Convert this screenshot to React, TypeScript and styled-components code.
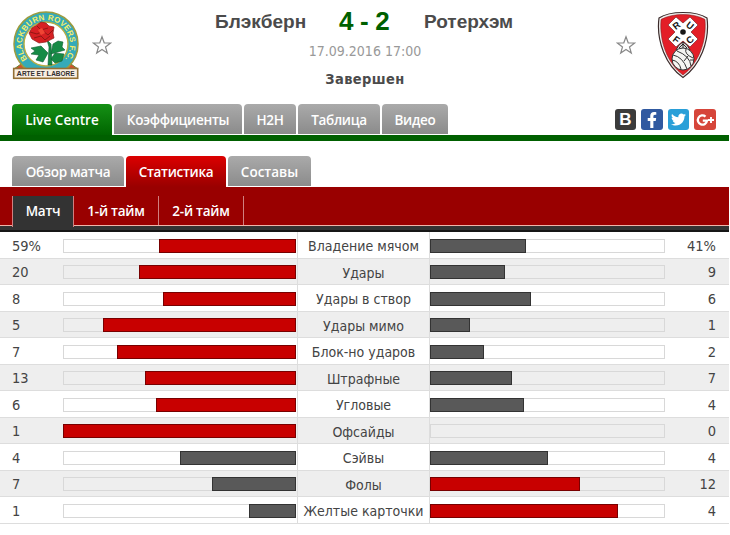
import styled, { createGlobalStyle, css } from "styled-components";
import { FaFacebookF, FaTwitter } from "react-icons/fa";

const GlobalStyle = createGlobalStyle`
  * {
    box-sizing: border-box;
  }

  body {
    margin: 0;
    background-color: #ffffff;
    font-family: "DejaVu Sans Condensed", "DejaVu Sans", Tahoma, sans-serif;
    color: #444444;
    overflow: hidden;
  }
`;

const Page = styled.div`
  width: 729px;
  height: 535px;
  overflow: hidden;
`;

const Header = styled.header`
  display: flex;
  height: 104px;
  padding: 11px 20px 0 12px;
`;

const StarButton = styled.button<{ $side: "left" | "right" }>`
  width: 20px;
  height: 20px;
  margin: ${(props) => (props.$side === "left" ? "24px 0 0 12px" : "24px 21px 0 0")};
  padding: 0;
  border: 0;
  background: none;
  cursor: pointer;

  svg {
    display: block;
  }
`;

const Summary = styled.div`
  flex: 1;
  display: flex;
  flex-direction: column;
  align-items: center;
  padding-left: 2px;
`;

const Teams = styled.div`
  display: grid;
  grid-template-columns: 90px 51px 91px;
  column-gap: 34px;
  height: 29px;
  margin-top: -5px;
  align-items: center;
  font-family: "Liberation Sans", Arial, sans-serif;
  font-weight: bold;
  white-space: nowrap;
`;

const TeamName = styled.span`
  font-size: 19px;
  color: #4b4b4b;
`;

const Score = styled.span`
  font-size: 26px;
  letter-spacing: -0.3px;
  color: #006000;
`;

const KickOff = styled.div`
  height: 18px;
  margin-top: 7px;
  font-size: 14px;
  line-height: 18px;
  color: #999999;
`;

const Status = styled.div`
  height: 18px;
  margin-top: 10px;
  font-size: 14.5px;
  font-weight: bold;
  line-height: 18px;
  letter-spacing: 0.4px;
  color: #4b4b4b;
`;

const NavRow = styled.nav<{ $color: string; $line: number }>`
  display: flex;
  align-items: flex-end;
  gap: 2px;
  padding-left: 12px;
  padding-right: 13px;
  border-bottom: ${(props) => props.$line}px solid ${(props) => props.$color};
`;

const tabText = css`
  font-family: "Open Sans", "Noto Sans", sans-serif;
  font-size: 13.5px;
  font-weight: 600;
  color: #ffffff;
  white-space: nowrap;
  cursor: pointer;
`;

const tabColors = {
  grey: css`
    height: 30px;
    margin-bottom: 1px;
    line-height: 32px;
    background: linear-gradient(#aaaaaa, #8b8b8b);
  `,
  green: css`
    height: 31px;
    line-height: 32px;
    background: linear-gradient(#159015, #006500);
  `,
  red: css`
    height: 31px;
    line-height: 32px;
    background: linear-gradient(#dc0000, #990000);
  `,
};

const Tab = styled.a<{ $tone: keyof typeof tabColors; $width: number; $spacing?: number }>`
  ${tabText}
  display: flex;
  justify-content: center;
  width: ${(props) => props.$width}px;
  border-radius: 4px 4px 0 0;
  letter-spacing: ${(props) => props.$spacing ?? -0.3}px;
  ${(props) => tabColors[props.$tone]}
`;

const Social = styled.div`
  display: flex;
  gap: 5px;
  margin-left: auto;
  margin-bottom: 5px;
`;

const SocialLink = styled.a<{ $color: string }>`
  display: flex;
  align-items: center;
  justify-content: center;
  width: 21.6px;
  height: 21px;
  border-radius: 3px;
  background-color: ${(props) => props.$color};
  color: #ffffff;
  font-family: "Liberation Sans", Arial, sans-serif;
  font-size: 17px;
  font-weight: bold;
`;

const Subsection = styled.section`
  padding-top: 15px;
`;

const Periods = styled.nav`
  display: flex;
  height: 38px;
  padding: 8px 0 0 12px;
  background-color: #990000;
  border-bottom: 1px solid #f0b4aa;
`;

const Period = styled.a<{ $active?: boolean; $width: number }>`
  ${tabText}
  width: ${(props) => props.$width}px;
  height: 29px;
  border-right: 1px solid #d08080;
  text-align: center;
  line-height: 30px;
  letter-spacing: -0.25px;

  ${(props) =>
    props.$active &&
    `
    height: 31px;
    border-left: 1px solid #d08080;
    background-color: #333333;
  `}
`;

const DarkLine = styled.div`
  height: 6px;
  background-color: #333333;
  border-bottom: 2px solid #161616;
`;

const Table = styled.div`
  display: flex;
  flex-direction: column;
`;

const Row = styled.div`
  display: grid;
  grid-template-columns: 63px 233px 134px 235px 1fr;
  align-items: center;
  height: 26.55px;
  border-bottom: 1px solid #dddddd;
  font-size: 14px;

  &:nth-child(even) {
    background-color: #eeeeee;
  }
`;

const Value = styled.span<{ $right?: boolean }>`
  padding: ${(props) => (props.$right ? "0 13px 0 0" : "0 0 0 12px")};
  text-align: ${(props) => (props.$right ? "right" : "left")};
  font-size: 14.5px;
  line-height: 20px;
`;

const Label = styled.span`
  height: 100%;
  margin-left: 1px;
  border: solid #dddddd;
  border-width: 0 1px;
  padding-top: 1px;
  line-height: 26px;
  text-align: center;
  white-space: nowrap;
`;

const Track = styled.div<{ $home?: boolean }>`
  display: flex;
  justify-content: ${(props) => (props.$home ? "flex-end" : "flex-start")};
  height: 14px;
  box-shadow: inset 0 0 0 1px #d8d8d8;
`;

const Bar = styled.div<{ $leading: boolean }>`
  flex: none;
  height: 14px;
  background-color: ${(props) => (props.$leading ? "#c80000" : "#595959")};
  border: 1px solid ${(props) => (props.$leading ? "#780000" : "#333333")};
`;

const mainTabs = [
  { title: "Коэффициенты", width: 128 },
  { title: "H2H", width: 52 },
  { title: "Таблица", width: 82 },
  { title: "Видео", width: 66 },
];

const stats = [
  { label: "Владение мячом", home: "59%", away: "41%", homeBar: 59, awayBar: 41 },
  { label: "Удары", home: "20", away: "9", homeBar: 67.5, awayBar: 32 },
  { label: "Удары в створ", home: "8", away: "6", homeBar: 57, awayBar: 43 },
  { label: "Удары мимо", home: "5", away: "1", homeBar: 83, awayBar: 17 },
  { label: "Блок-но ударов", home: "7", away: "2", homeBar: 77, awayBar: 23 },
  { label: "Штрафные", home: "13", away: "7", homeBar: 65, awayBar: 35 },
  { label: "Угловые", home: "6", away: "4", homeBar: 60, awayBar: 40 },
  { label: "Офсайды", home: "1", away: "0", homeBar: 100, awayBar: 0 },
  { label: "Сэйвы", home: "4", away: "4", homeBar: 50, awayBar: 50 },
  { label: "Фолы", home: "7", away: "12", homeBar: 36, awayBar: 64 },
  { label: "Желтые карточки", home: "1", away: "4", homeBar: 20, awayBar: 80 },
];

const Star = () => (
  <svg width="20" height="20" viewBox="0 0 20 20" fill="#fff" stroke="#888" strokeWidth="1.2">
    <path d="M10 1.8 12.2 7.8 18.6 8 13.5 11.9 15.3 18 10 14.4 4.7 18 6.5 11.9 1.4 8 7.8 7.8Z" />
  </svg>
);

const BlackburnCrest = () => (
  <svg width="68" height="70" viewBox="0 0 68 70">
    <path d="M2 58 9 53 59 53 66 58Z" fill="#d4512c" stroke="#6a8a35" />
    <circle cx="34" cy="33" r="32" fill="#35aab8" stroke="#9d9b3d" strokeWidth="1.5" />
    <circle cx="34" cy="33" r="22" fill="#fff" stroke="#b7ad45" strokeWidth="1.4" />
    <path id="crest-arc" d="M18 51A24 24 0 1 1 50 51" fill="none" />
    <text fontFamily="Liberation Sans" fontSize="8" fontWeight="bold" fill="#f6ee6a">
      <textPath href="#crest-arc" startOffset="4" textLength="107">
        BLACKBURN ROVERS F.C.
      </textPath>
    </text>
    <g fill="#168b46" stroke="#0b5d30" strokeWidth=".6">
      <path d="M35 29 39 33 40 54 36 54 37 36Z" />
      <path d="M36 42 29 35 19 37 23 40 19 43 27 44 24 49 31 51Z" />
      <path d="M39 43 41 33 46 30 51 31 50 36 53 39Z" />
      <path d="M39 48 43 42 52 43 50 50 43 52Z" />
    </g>
    <path
      d="M20 17 25 14 29 11 34 12 37 15 42 16 41 22 42 27 34 31 27 32 20 28 17 22Z"
      fill="#d62023"
      stroke="#8c1918"
      strokeWidth=".7"
    />
    <path
      d="M18 21 25 23 31 20 36 24 41 19M25 15 29 19 36 17M22 27 29 25 33 29 38 25"
      fill="none"
      stroke="#8a1512"
      strokeWidth=".9"
    />
    <path d="M26 19 30 17 33 22 29 24Z" fill="#f04534" />
    <rect x="1.7" y="57.5" width="64" height="9.8" fill="#f9eee0" stroke="#947034" strokeWidth="1.6" />
    <g fontFamily="Liberation Sans" fontWeight="bold" fill="#353030">
      <text x="4.5" y="65" textLength="58" fontSize="7.5">
        <tspan>A</tspan>
        <tspan fontSize="6.5">RTE ET </tspan>
        <tspan>L</tspan>
        <tspan fontSize="6.5">ABORE</tspan>
      </text>
    </g>
  </svg>
);

const RotherhamCrest = () => (
  <svg width="52" height="68" viewBox="0 0 52 68">
    <path
      d="M26 1.5C34 1.5 44 3 50 7 53 30 43 55 26 66.5 9 55-1 30 2 7 8 3 18 1.5 26 1.5Z"
      fill="#f3f1ef"
      stroke="#3b2b2b"
      strokeWidth="1.2"
    />
    <path
      d="M26 3.5C34 3.5 42 5 48 8.5 50 31 41 53 26 64 11 53 2 31 4 8.5 10 5 18 3.5 26 3.5Z"
      fill="#e31e27"
      stroke="#751419"
      strokeWidth=".5"
    />
    <path
      d="M11 14 19 6 26 12 33 6 41 14 34 21 41 28 33 36 26 30 19 36 11 28 18 21Z"
      fill="#fff"
      stroke="#6b1619"
      strokeWidth=".6"
    />
    <circle cx="26" cy="21" r="2.8" fill="#171717" />
    <g fontFamily="Liberation Sans" fontSize="9.5" fontWeight="bold" fill="#171717" textAnchor="middle">
      <text transform="translate(21.4 17.2) rotate(-38)">R</text>
      <text transform="translate(31 17.2) rotate(38)">U</text>
      <text transform="translate(17.4 31.4) rotate(38)">F</text>
      <text transform="translate(35 31.4) rotate(-38)">C</text>
    </g>
    <path d="M19 39 22 34 26 31 30 34 33 39Z" fill="#ddd" stroke="#171717" strokeWidth=".8" />
    <path d="M22 37 26 33 30 37M26 31V38" fill="none" stroke="#171717" strokeWidth=".9" />
    <circle cx="26" cy="48" r="11" fill="#f5f5f2" stroke="#333" />
    <path
      d="M16 44Q26 46 30 58M20 40Q33 45 34 55M29 38Q27 43 36 47M15 49Q22 50 24 58M31 45 27 50M37 49H33"
      fill="none"
      stroke="#333"
    />
  </svg>
);

const GooglePlus = () => (
  <svg width="20" height="16" viewBox="0 0 20 16" fill="none" stroke="#fff" strokeWidth="2.3">
    <path d="M10.5 4.6A4.6 4.6 0 1 0 12 8.6H7.8" />
    <path d="M16 5V11M13 8H19" strokeWidth="1.9" />
  </svg>
);

export default function App() {
  return (
    <Page>
      <GlobalStyle />
      <Header>
        <BlackburnCrest />
        <StarButton $side="left" aria-label="Блэкберн">
          <Star />
        </StarButton>
        <Summary>
          <Teams>
            <TeamName>Блэкберн</TeamName>
            <Score>4 - 2</Score>
            <TeamName>Ротерхэм</TeamName>
          </Teams>
          <KickOff>17.09.2016 17:00</KickOff>
          <Status>Завершен</Status>
        </Summary>
        <StarButton $side="right" aria-label="Ротерхэм">
          <Star />
        </StarButton>
        <RotherhamCrest />
      </Header>

      <NavRow $color="#006000" $line={6}>
        <Tab $tone="green" $width={100} $spacing={0}>
          Live Centre
        </Tab>
        {mainTabs.map((tab) => (
          <Tab key={tab.title} $tone="grey" $width={tab.width}>
            {tab.title}
          </Tab>
        ))}
        <Social>
          <SocialLink $color="#3b3b3b">B</SocialLink>
          <SocialLink $color="#3059a0">
            <FaFacebookF size={16} />
          </SocialLink>
          <SocialLink $color="#299fd8">
            <FaTwitter size={15} />
          </SocialLink>
          <SocialLink $color="#d6453a">
            <GooglePlus />
          </SocialLink>
        </Social>
      </NavRow>

      <Subsection>
        <NavRow $color="#990000" $line={1}>
          <Tab $tone="grey" $width={112}>
            Обзор матча
          </Tab>
          <Tab $tone="red" $width={100}>
            Статистика
          </Tab>
          <Tab $tone="grey" $width={83} $spacing={0}>
            Составы
          </Tab>
        </NavRow>
        <Periods>
          <Period $active $width={62}>
            Матч
          </Period>
          <Period $width={85}>1-й тайм</Period>
          <Period $width={85}>2-й тайм</Period>
        </Periods>
        <DarkLine />
      </Subsection>

      <Table>
        {stats.map((stat) => (
          <Row key={stat.label}>
            <Value>{stat.home}</Value>
            <Track $home>
              <Bar $leading={stat.homeBar > stat.awayBar} style={{ width: `${stat.homeBar}%` }} />
            </Track>
            <Label>{stat.label}</Label>
            <Track>
              {stat.awayBar > 0 && (
                <Bar $leading={stat.awayBar > stat.homeBar} style={{ width: `${stat.awayBar}%` }} />
              )}
            </Track>
            <Value $right>{stat.away}</Value>
          </Row>
        ))}
      </Table>
    </Page>
  );
}
